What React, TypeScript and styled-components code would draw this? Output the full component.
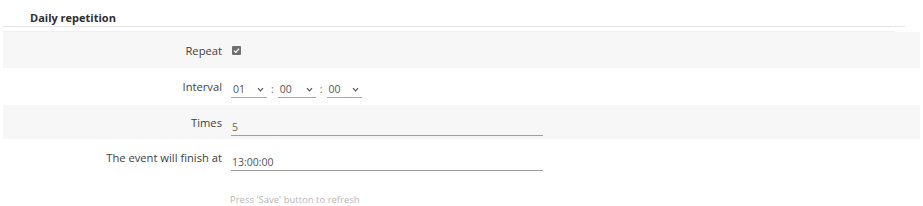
import styled, { createGlobalStyle } from "styled-components";

const Global = createGlobalStyle`
  body {
    margin: 0;
    background: #ffffff;
    font-family: "Open Sans", "Noto Sans", sans-serif;
  }
`;

const Page = styled.div`
  width: 923px;
  height: 206px;
  padding: 0 3px;
  box-sizing: border-box;
  overflow: hidden;
`;

const Header = styled.div`
  height: 27px;
  box-sizing: border-box;
  margin-right: 15px;
  padding: 0 0 1px 27px;
  display: flex;
  align-items: flex-end;
  font-size: 11px;
  font-weight: 700;
  color: #2e2e2e;
  border-bottom: 1px solid #e4e4e4;
`;

const Spacer = styled.div`
  height: 4px;
  margin-right: 25px;
  border-bottom: 1px solid #f0f0f0;
`;

const Row = styled.div<{ $shaded?: boolean; $h?: number }>`
  display: grid;
  grid-template-columns: 219px 1fr;
  column-gap: 9px;
  align-items: center;
  height: ${p => p.$h ?? 36}px;
  background: ${p => (p.$shaded ? "#f7f7f7" : "#ffffff")};
  font-size: 10.5px;
  color: #444;
`;

const Label = styled.span`
  text-align: right;
  white-space: nowrap;
  font-size: 11.2px;
  color: #3f3f3f;
`;

const Cell = styled.div`
  display: flex;
  align-items: center;
  gap: 2px;
`;

const Check = styled.span`
  width: 9px;
  height: 9px;
  border-radius: 1px;
  background: #6f6f6f;
  display: inline-flex;
  align-items: center;
  justify-content: center;
  margin-left: 1px;
`;

const Select = styled.div<{ $w: number }>`
  width: ${p => p.$w}px;
  height: 16px;
  box-sizing: border-box;
  border-bottom: 1px solid #a8a8a8;
  display: flex;
  align-items: center;
  justify-content: space-between;
  padding: 0 3px 0 2px;
  color: #555;
  margin-top: 6px;
`;

const Colon = styled.span`
  color: #777;
  padding: 0 2px;
  margin-top: 4px;
`;

const Input = styled.div<{ $tone?: string }>`
  width: 312px;
  height: 18px;
  box-sizing: border-box;
  border-bottom: 1px solid #a0a0a0;
  display: flex;
  align-items: center;
  padding-left: 1px;
  color: ${p => p.$tone ?? "#555"};
  margin-top: 10px;
`;

const Note = styled.div`
  padding: 18px 0 0 227px;
  font-size: 9.5px;
  color: #b8b8b8;
`;

function Chevron() {
  return (
    <svg width="7" height="5" viewBox="0 0 7 5">
      <path d="M1 1.2 L3.5 3.8 L6 1.2" fill="none" stroke="#555" strokeWidth="1.2" />
    </svg>
  );
}

export default function App() {
  return (
    <Page>
      <Global />
      <Header>Daily repetition</Header>
      <Spacer />
      <Row $shaded>
        <Label>Repeat</Label>
        <Cell>
          <Check>
            <svg width="7" height="7" viewBox="0 0 7 7">
              <path d="M1 3.6 L2.8 5.3 L6 1.6" fill="none" stroke="#fff" strokeWidth="1.2" />
            </svg>
          </Check>
        </Cell>
      </Row>
      <Row $h={37}>
        <Label>Interval</Label>
        <Cell>
          <Select $w={36}>
            <span>01</span>
            <Chevron />
          </Select>
          <Colon>:</Colon>
          <Select $w={38}>
            <span>00</span>
            <Chevron />
          </Select>
          <Colon>:</Colon>
          <Select $w={35}>
            <span>00</span>
            <Chevron />
          </Select>
        </Cell>
      </Row>
      <Row $shaded $h={34}>
        <Label>Times</Label>
        <Cell>
          <Input $tone="#6b6640">5</Input>
        </Cell>
      </Row>
      <Row $h={36}>
        <Label>The event will finish at</Label>
        <Cell>
          <Input>13:00:00</Input>
        </Cell>
      </Row>
      <Note>Press 'Save' button to refresh</Note>
    </Page>
  );
}
